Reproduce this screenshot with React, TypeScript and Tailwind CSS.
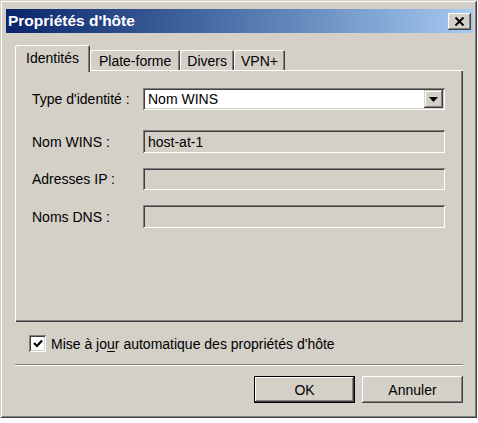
import React from "react";

export default function App() {
  return (
    <div className="w-[478px] h-[423px] bg-white font-['Tahoma','Liberation_Sans',sans-serif] text-[14px] text-black leading-none">
      <div className="w-[477px] h-[418px] bg-[#d4d0c8] flex flex-col pt-[9px] shadow-[inset_1px_1px_#d4d0c8,inset_-1px_-1px_#404040,inset_2px_2px_#ffffff,inset_-2px_-2px_#808080]">
        {/* Title bar */}
        <div className="ml-[6px] mr-[4px] h-[24px] flex items-center justify-between pl-[2px] pr-[2px] bg-linear-to-r from-[#0a246a] to-[#a6caf0]">
          <span className="text-white font-bold text-[15.5px]">Propriétés d'hôte</span>
          <div className="w-[23px] h-[17px] bg-[#d4d0c8] flex items-center justify-center shadow-[inset_-1px_-1px_#404040,inset_1px_1px_#ffffff,inset_-2px_-2px_#808080,inset_2px_2px_#d4d0c8]">
            <svg width="11" height="9" viewBox="0 0 11 9">
              <path d="M1.5 0.5 L9.5 8.5 M9.5 0.5 L1.5 8.5" stroke="#000" strokeWidth="2" />
            </svg>
          </div>
        </div>

        {/* Tabs */}
        <div className="mt-[12px] ml-[15px] h-[25px] flex items-end">
          <div className="relative z-10 h-[27px] -mb-[2px] pl-[11px] pr-[11px] flex items-center pb-[1px] bg-[#d4d0c8] rounded-t-[2px] shadow-[inset_1px_1px_#ffffff,inset_-1px_0_#404040,inset_-2px_0_#808080]">
            Identités
          </div>
          <div className="h-[20px] px-[9px] flex items-center pt-[1px] bg-[#d4d0c8] rounded-t-[2px] shadow-[inset_1px_1px_#ffffff,inset_-1px_0_#404040,inset_-2px_0_#808080]">
            Plate-forme
          </div>
          <div className="h-[20px] px-[7px] flex items-center pt-[1px] bg-[#d4d0c8] rounded-t-[2px] shadow-[inset_1px_1px_#ffffff,inset_-1px_0_#404040,inset_-2px_0_#808080]">
            Divers
          </div>
          <div className="h-[20px] px-[7px] flex items-center pt-[1px] bg-[#d4d0c8] rounded-t-[2px] shadow-[inset_1px_1px_#ffffff,inset_-1px_0_#404040,inset_-2px_0_#808080]">
            VPN+
          </div>
        </div>

        {/* Panel */}
        <div className="ml-[15px] w-[448px] h-[252px] pt-[18px] pl-[17px] flex flex-col shadow-[inset_1px_1px_#ffffff,inset_-1px_-1px_#404040,inset_-2px_-2px_#808080]">
          <div className="flex items-center h-[22px]">
            <div className="w-[111px]">Type d'identité :</div>
            <div className="w-[302px] h-[22px] bg-white flex items-center justify-between pl-[5px] pr-[2px] shadow-[inset_1px_1px_#808080,inset_-1px_-1px_#ffffff,inset_2px_2px_#404040,inset_-2px_-2px_#d4d0c8]">
              <span>Nom WINS</span>
              <div className="w-[19px] h-[18px] bg-[#d4d0c8] flex items-center justify-center shadow-[inset_-1px_-1px_#404040,inset_1px_1px_#d4d0c8,inset_-2px_-2px_#808080,inset_2px_2px_#ffffff]">
                <svg width="9" height="5" viewBox="0 0 9 5">
                  <path d="M0 0 H9 L4.5 5 Z" fill="#000" />
                </svg>
              </div>
            </div>
          </div>

          <div className="flex items-center h-[23px] mt-[20px]">
            <div className="w-[111px]">Nom WINS :</div>
            <div className="w-[302px] h-[23px] flex items-center pl-[5px] shadow-[inset_1px_1px_#808080,inset_-1px_-1px_#ffffff,inset_2px_2px_#404040,inset_-2px_-2px_#d4d0c8]">
              host-at-1
            </div>
          </div>

          <div className="flex items-center h-[22px] mt-[15px]">
            <div className="w-[111px]">Adresses IP :</div>
            <div className="w-[302px] h-[22px] shadow-[inset_1px_1px_#808080,inset_-1px_-1px_#ffffff,inset_2px_2px_#404040,inset_-2px_-2px_#d4d0c8]" />
          </div>

          <div className="flex items-center h-[23px] mt-[15px]">
            <div className="w-[111px]">Noms DNS :</div>
            <div className="w-[302px] h-[23px] shadow-[inset_1px_1px_#808080,inset_-1px_-1px_#ffffff,inset_2px_2px_#404040,inset_-2px_-2px_#d4d0c8]" />
          </div>
        </div>

        {/* Checkbox */}
        <div className="mt-[13px] ml-[29px] flex items-center h-[17px]">
          <div className="w-[17px] h-[17px] bg-white flex items-center justify-center shadow-[inset_1px_1px_#808080,inset_-1px_-1px_#ffffff,inset_2px_2px_#404040,inset_-2px_-2px_#d4d0c8]">
            <svg width="10" height="9" viewBox="0 0 10 9">
              <path d="M1 4 L4 7 L9 1.5" stroke="#000" strokeWidth="2.2" fill="none" />
            </svg>
          </div>
          <span className="ml-[5px]">
            Mise à jo<span className="underline underline-offset-2">u</span>r automatique des propriétés d'hôte
          </span>
        </div>

        {/* Separator */}
        <div className="mt-[12px] ml-[15px] w-[448px] h-[2px] border-t border-t-[#808080] border-b border-b-white" />

        {/* Buttons */}
        <div className="mt-[10px] flex justify-end pr-[14px] gap-[7px]">
          <div className="w-[101px] h-[27px] border border-black">
            <div className="w-full h-full flex items-center justify-center bg-[#d4d0c8] shadow-[inset_-1px_-1px_#404040,inset_1px_1px_#ffffff,inset_-2px_-2px_#808080,inset_2px_2px_#d4d0c8]">
              OK
            </div>
          </div>
          <div className="w-[101px] h-[27px] flex items-center justify-center bg-[#d4d0c8] shadow-[inset_-1px_-1px_#404040,inset_1px_1px_#ffffff,inset_-2px_-2px_#808080,inset_2px_2px_#d4d0c8]">
            Annuler
          </div>
        </div>
      </div>
    </div>
  );
}
